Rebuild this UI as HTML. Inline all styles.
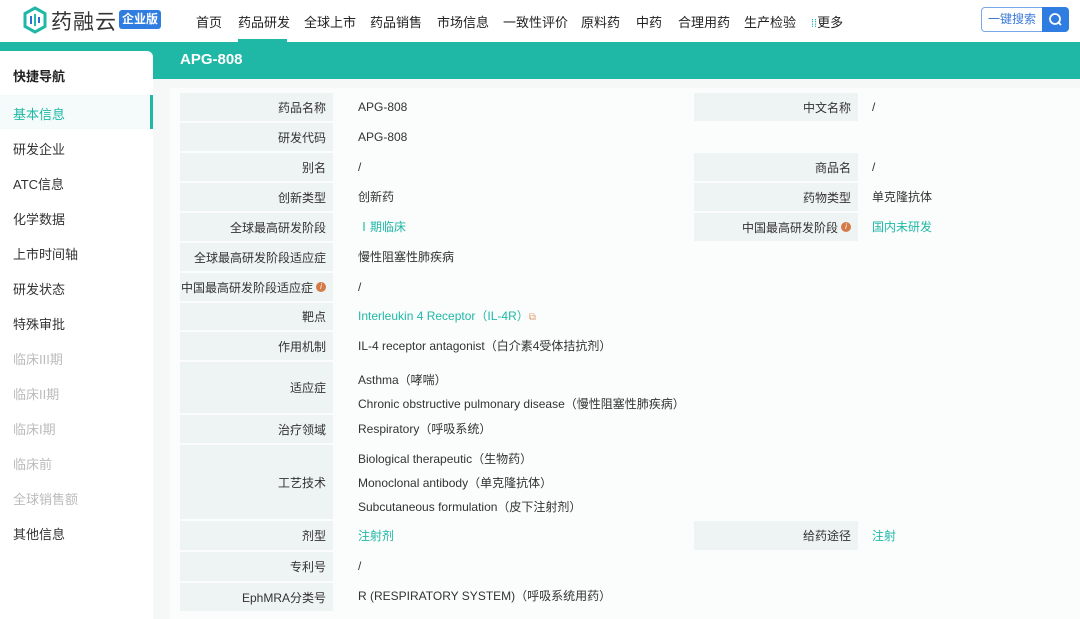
<!DOCTYPE html>
<html><head><meta charset="utf-8"><style>
*{margin:0;padding:0;box-sizing:border-box}
body{width:1080px;height:619px;overflow:hidden;background:#f6f8f8;font-family:"Liberation Sans","Noto Sans CJK SC",sans-serif;position:relative;color:#333;font-size:12px}
.hdr{position:absolute;left:0;top:0;width:1080px;height:42px;background:#fff}
.nav{position:absolute;top:12px;font-size:13px;color:#222}
.band{position:absolute;left:0;top:42px;width:1080px;height:37px;background:#1fb8a6}
.title{position:absolute;left:180px;top:51px;color:#fff;font-weight:bold;font-size:15px}
.side{position:absolute;left:0;top:51px;width:153px;height:568px;background:#fff;border-radius:0 6px 0 0}
.si{position:absolute;left:13px;font-size:13px;color:#333}
.main{position:absolute;left:170px;top:88px;width:910px;height:531px;background:#fbfcfc}
.l{position:absolute;background:#eef3f3;text-align:right;padding-right:7px;font-size:12px;color:#333;display:flex;align-items:center;justify-content:flex-end}
.v{position:absolute;font-size:12px;color:#333;line-height:14px}
.g{color:#1fb8a6}
.i{display:inline-block;width:10px;height:10px;border-radius:50%;background:#d47a47;margin-left:3px;color:#fff;font-size:8px;line-height:10px;text-align:center;font-style:italic}
</style></head><body>
<div class="hdr">
<svg style="position:absolute;left:22px;top:6px" width="26" height="28" viewBox="0 0 26 28"><path d="M13 2 L23 7.5 V20.5 L13 26 L3 20.5 V7.5 Z" fill="none" stroke="#1fb8a6" stroke-width="3"/><rect x="8" y="10" width="2" height="8" fill="#2a6fd6"/><rect x="12" y="8" width="2" height="12" fill="#1fb8a6"/><rect x="16" y="11" width="2" height="6" fill="#2a6fd6"/></svg>
<div style="position:absolute;left:51px;top:6px;font-size:21px;color:#333;letter-spacing:1px">药融云</div>
<div style="position:absolute;left:119px;top:10px;width:42px;height:19px;background:#2f7de1;border-radius:3px;color:#fff;font-size:12px;font-weight:bold;text-align:center;line-height:19px">企业版</div>
<div class="nav" style="left:196px">首页</div>
<div class="nav" style="left:238px">药品研发</div>
<div style="position:absolute;left:238px;top:39px;width:49px;height:3px;background:#1fb8a6"></div>
<div class="nav" style="left:304px">全球上市</div>
<div class="nav" style="left:370px">药品销售</div>
<div class="nav" style="left:437px">市场信息</div>
<div class="nav" style="left:503px">一致性评价</div>
<div class="nav" style="left:581px">原料药</div>
<div class="nav" style="left:636px">中药</div>
<div class="nav" style="left:678px">合理用药</div>
<div class="nav" style="left:744px">生产检验</div>
<div class="nav" style="left:811px"><span style="color:#1fb8a6;font-size:11px">⁞⁞</span>更多</div>
<div style="position:absolute;left:981px;top:7px;width:62px;height:25px;border:1px solid #7aa7e8;border-radius:4px 0 0 4px;font-size:12px;color:#3b7ad9;text-align:center;line-height:23px">一键搜索</div>
<div style="position:absolute;left:1042px;top:7px;width:27px;height:25px;background:#2f7de1;border-radius:0 4px 4px 0"><svg width="27" height="25"><circle cx="13" cy="12" r="5" fill="none" stroke="#fff" stroke-width="1.8"/><path d="M16.5 15.5 L19 18" stroke="#fff" stroke-width="1.8"/></svg></div>
</div>
<div class="band"></div>
<div class="title">APG-808</div>
<div class="side">
<div class="si" style="top:15px;font-weight:bold;color:#222">快捷导航</div>
<div style="position:absolute;left:0;top:44px;width:153px;height:34px;background:#f4fbfa"></div>
<div style="position:absolute;left:150px;top:44px;width:3px;height:34px;background:#1fb8a6"></div>
<div class="si g" style="top:53px">基本信息</div>
<div class="si" style="top:88px">研发企业</div>
<div class="si" style="top:123px">ATC信息</div>
<div class="si" style="top:158px">化学数据</div>
<div class="si" style="top:193px">上市时间轴</div>
<div class="si" style="top:228px">研发状态</div>
<div class="si" style="top:263px">特殊审批</div>
<div class="si" style="top:298px;color:#bbb">临床III期</div>
<div class="si" style="top:333px;color:#bbb">临床II期</div>
<div class="si" style="top:368px;color:#bbb">临床I期</div>
<div class="si" style="top:403px;color:#bbb">临床前</div>
<div class="si" style="top:438px;color:#bbb">全球销售额</div>
<div class="si" style="top:473px">其他信息</div>
</div>
<div class="main"></div>

<div class="l" style="left:180px;top:93px;width:153px;height:28px">药品名称</div><div class="v" style="left:358px;top:100px">APG-808</div>
<div class="l" style="left:694px;top:93px;width:164px;height:28px">中文名称</div><div class="v" style="left:872px;top:100px">/</div>
<div class="l" style="left:180px;top:123px;width:153px;height:28px">研发代码</div><div class="v" style="left:358px;top:130px">APG-808</div>
<div class="l" style="left:180px;top:153px;width:153px;height:28px">别名</div><div class="v" style="left:358px;top:160px">/</div>
<div class="l" style="left:694px;top:153px;width:164px;height:28px">商品名</div><div class="v" style="left:872px;top:160px">/</div>
<div class="l" style="left:180px;top:183px;width:153px;height:28px">创新类型</div><div class="v" style="left:358px;top:190px">创新药</div>
<div class="l" style="left:694px;top:183px;width:164px;height:28px">药物类型</div><div class="v" style="left:872px;top:190px">单克隆抗体</div>
<div class="l" style="left:180px;top:213px;width:153px;height:28px">全球最高研发阶段</div><div class="v g" style="left:358px;top:220px">Ⅰ期临床</div>
<div class="l" style="left:694px;top:213px;width:164px;height:28px">中国最高研发阶段<span class="i">i</span></div><div class="v g" style="left:872px;top:220px">国内未研发</div>
<div class="l" style="left:180px;top:243px;width:153px;height:28px">全球最高研发阶段适应症</div><div class="v" style="left:358px;top:250px">慢性阻塞性肺疾病</div>
<div class="l" style="left:180px;top:273px;width:153px;height:28px">中国最高研发阶段适应症<span class="i">i</span></div><div class="v" style="left:358px;top:280px">/</div>
<div class="l" style="left:180px;top:303px;width:153px;height:27px">靶点</div><div class="v g" style="left:358px;top:309px">Interleukin 4 Receptor（IL-4R）<span style="color:#e0a070;font-size:10px">⧉</span></div>
<div class="l" style="left:180px;top:332px;width:153px;height:28px">作用机制</div><div class="v" style="left:358px;top:339px">IL-4 receptor antagonist（白介素4受体拮抗剂）</div>
<div class="l" style="left:180px;top:362px;width:153px;height:51px">适应症</div><div class="v" style="left:358px;top:368px;line-height:24px">Asthma（哮喘）<br>Chronic obstructive pulmonary disease（慢性阻塞性肺疾病）</div>
<div class="l" style="left:180px;top:415px;width:153px;height:28px">治疗领域</div><div class="v" style="left:358px;top:422px">Respiratory（呼吸系统）</div>
<div class="l" style="left:180px;top:445px;width:153px;height:74px">工艺技术</div><div class="v" style="left:358px;top:447px;line-height:24px">Biological therapeutic（生物药）<br>Monoclonal antibody（单克隆抗体）<br>Subcutaneous formulation（皮下注射剂）</div>
<div class="l" style="left:180px;top:521px;width:153px;height:29px">剂型</div><div class="v g" style="left:358px;top:529px">注射剂</div>
<div class="l" style="left:694px;top:521px;width:164px;height:29px">给药途径</div><div class="v g" style="left:872px;top:529px">注射</div>
<div class="l" style="left:180px;top:552px;width:153px;height:29px">专利号</div><div class="v" style="left:358px;top:559px">/</div>
<div class="l" style="left:180px;top:583px;width:153px;height:28px">EphMRA分类号</div><div class="v" style="left:358px;top:589px">R (RESPIRATORY SYSTEM)（呼吸系统用药）</div>
</body></html>
